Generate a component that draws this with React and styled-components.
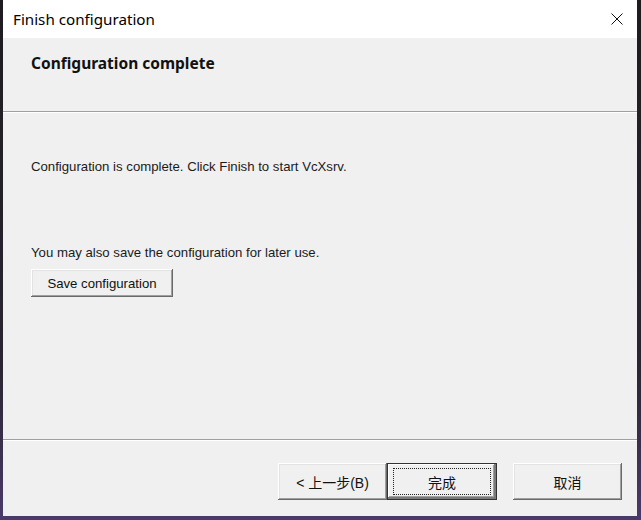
import styled, { createGlobalStyle } from "styled-components";

const GlobalStyle = createGlobalStyle`
  html, body {
    margin: 0;
    padding: 0;
    background: #241f2a;
  }
  #root {
    width: 641px;
    height: 520px;
    overflow: hidden;
    background: linear-gradient(180deg, #1e1c20 0%, #2a2530 70%, #4a3a6a 100%);
  }
`;

const Window = styled.div`
  margin-left: 3px;
  width: 634px;
  height: 516px;
  display: flex;
  flex-direction: column;
  background: #f0f0f0;
  font-family: "Liberation Sans", "Noto Sans CJK SC", sans-serif;
  color: #000;
`;

const TitleBar = styled.div`
  height: 38px;
  flex: none;
  display: flex;
  align-items: center;
  justify-content: space-between;
  background: #fff;
  padding: 0 14px 0 10px;
  font-family: "Noto Sans", "Liberation Sans", sans-serif;
  font-size: 15.2px;
`;

const Header = styled.div`
  height: 73px;
  flex: none;
  padding: 14px 0 0 28px;
  box-sizing: border-box;
  font-family: "Noto Sans", "Liberation Sans", sans-serif;
  font-size: 15.5px;
  font-weight: 700;
  color: #111;
`;

const Separator = styled.div`
  flex: none;
  height: 1px;
  background: #a0a0a0;
  border-bottom: 1px solid #fff;
`;

const Body = styled.div`
  flex: 1;
  display: flex;
  flex-direction: column;
  padding: 46px 0 0 28px;
  font-size: 13.2px;
  color: #1a1a1a;
`;

const Text = styled.p`
  margin: 0;
  margin-bottom: ${(p) => p.$gap || 0}px;
  line-height: 16px;
`;

const Button = styled.button`
  box-sizing: border-box;
  width: ${(p) => p.$w}px;
  height: ${(p) => p.$h}px;
  background: #f0f0f0;
  border: none;
  padding: 0;
  font-family: "Liberation Sans", "Noto Sans CJK SC", sans-serif;
  font-size: ${(p) => p.$size || 13.2}px;
  color: #111;
  box-shadow: inset -1px -1px 0 #6a6a6a, inset 1px 1px 0 #fff, inset -2px -2px 0 #a0a0a0,
    inset 2px 2px 0 #e3e3e3;
  display: flex;
  align-items: center;
  justify-content: center;
`;

const DefaultButton = styled(Button)`
  border: 1px solid #333;
  box-shadow: inset -2px -2px 0 #7a7a7a, inset 1px 1px 0 #fff, inset -3px -3px 0 #a0a0a0;
  position: relative;

  &::after {
    content: "";
    position: absolute;
    inset: 4px 5px 4px 5px;
    border: 1px dotted #222;
  }
`;

const Footer = styled.div`
  height: 75px;
  flex: none;
  display: flex;
  align-items: flex-start;
  padding: 22px 0 0 275px;
  box-sizing: border-box;
`;

const Gap = styled.div`
  width: ${(p) => p.$w}px;
`;

const CloseIcon = () => (
  <svg width="12" height="12" viewBox="0 0 12 12">
    <path d="M0.5 0.5 L11.5 11.5 M11.5 0.5 L0.5 11.5" stroke="#111" strokeWidth="1" />
  </svg>
);

export default function App() {
  return (
    <>
      <GlobalStyle />
      <Window>
        <TitleBar>
          <span>Finish configuration</span>
          <CloseIcon />
        </TitleBar>
        <Header>Configuration complete</Header>
        <Separator />
        <Body>
          <Text $gap={70}>Configuration is complete. Click Finish to start VcXsrv.</Text>
          <Text $gap={8}>You may also save the configuration for later use.</Text>
          <Button $w={142} $h={28}>Save configuration</Button>
        </Body>
        <Separator />
        <Footer>
          <Button $w={109} $h={37} $size={14}>&lt; 上一步(B)</Button>
          <DefaultButton $w={110} $h={37} $size={14}>完成</DefaultButton>
          <Gap $w={16} />
          <Button $w={109} $h={37} $size={14}>取消</Button>
        </Footer>
      </Window>
    </>
  );
}
